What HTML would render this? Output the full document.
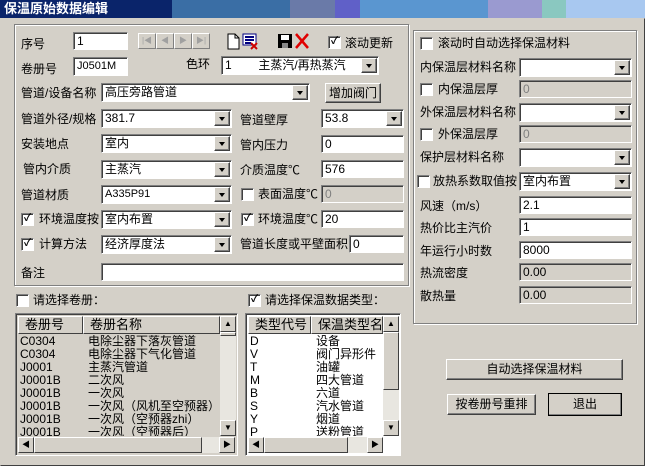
<!DOCTYPE html>
<html><head><meta charset="utf-8"><style>
*{box-sizing:border-box;margin:0;padding:0}
body{width:645px;height:466px;overflow:hidden;background:#d4d0c8;font-family:"Liberation Sans","Noto Sans CJK SC","WenQuanYi Zen Hei",sans-serif;font-size:12px;color:#000;position:relative}
div,span{position:absolute}
.t{white-space:nowrap;line-height:14px}
.f{background:#fff;border:1px solid;border-color:#808080 #fff #fff #808080;box-shadow:inset 1px 1px #404040;padding:2px 0 0 3px;line-height:13px;white-space:nowrap;overflow:hidden;font-size:12px}
.d{background:#d4d0c8;color:#808080}
.b{position:absolute;right:1px;top:1px;bottom:1px;width:16px;background:#d4d0c8;border:1px solid;border-color:#fff #404040 #404040 #fff;box-shadow:inset -1px -1px #808080}
.b:after{content:"";position:absolute;left:4px;top:5px;border:3px solid transparent;border-top:4px solid #000;border-bottom:0}
.g{border:1px solid #808080;box-shadow:1px 1px #fff,inset 1px 1px #fff}
.cb{width:13px;height:13px;background:#fff;border:1px solid;border-color:#808080 #fff #fff #808080;box-shadow:inset 1px 1px #404040;font-size:10px;line-height:10px;text-align:center;font-weight:bold}
.btn{background:#d4d0c8;border:1px solid;border-color:#fff #404040 #404040 #fff;box-shadow:inset -1px -1px #808080;text-align:center;line-height:19px}
.nb{width:18px;height:16px;top:33px;background:#d4d0c8;border:1px solid;border-color:#fff #808080 #808080 #fff;color:#a0a0a0;font-size:8px;line-height:14px;text-align:center}
.lst{background:#fff;border:1px solid;border-color:#808080 #fff #fff #808080;box-shadow:inset 1px 1px #404040;overflow:hidden}
.hd{background:#d4d0c8;border:1px solid;border-color:#fff #404040 #404040 #fff;height:18px;line-height:16px;padding-left:6px;font-size:13px;white-space:nowrap;overflow:hidden}
.sb{background:#e8e6e0}
.sa{width:16px;height:16px;background:#d4d0c8;border:1px solid;border-color:#fff #404040 #404040 #fff;font-size:8px;text-align:center;line-height:14px}
.row{height:13px;line-height:13px;font-size:12px;white-space:nowrap}
</style></head><body>
<div style="left:0;top:0;width:645px;height:18px;background:linear-gradient(90deg,#0a246a 0,#0a246a 172px,#3a6ea5 172px,#3a6ea5 290px,#6a7aa8 290px,#6a7aa8 335px,#6060c8 335px,#6060c8 360px,#5a96d0 360px,#5a96d0 488px,#9a9ad0 488px,#9a9ad0 542px,#8ac8c0 542px,#8ac8c0 566px,#a8c8f0 566px)"></div>
<div class="t" style="left:4px;top:2px;color:#fff;font-weight:bold;font-size:13px">保温原始数据编辑</div>
<div style="left:0;top:18px;width:645px;height:448px;border:1px solid;border-color:#d4d0c8 #404040 #404040 #d4d0c8"></div>

<div class="g" style="left:14px;top:24px;width:395px;height:262px"></div>
<div class="t" style="left:21px;top:37px">序号</div>
<div class="f" style="left:73px;top:32px;width:55px;height:18px">1</div>
<div class="nb" style="left:138px">|◀</div>
<div class="nb" style="left:156px">◀</div>
<div class="nb" style="left:174px">▶</div>
<div class="nb" style="left:192px">▶|</div>
<svg style="position:absolute;left:226px;top:32px" width="90" height="18"><path d="M2 2h7l4 4v11H2z" fill="#fff" stroke="#000"/><path d="M9 2v4h4" fill="none" stroke="#000"/><rect x="17" y="2" width="13" height="11" fill="#fff" stroke="#000080"/><path d="M19 5h9M19 8h9M19 11h6" stroke="#000080" stroke-width="2"/><path d="M25 11l6 6M31 11l-6 6" stroke="#c00" stroke-width="2"/><rect x="52" y="2" width="14" height="14" fill="#000"/><rect x="55" y="3" width="8" height="5" fill="#fff"/><rect x="56" y="11" width="6" height="5" fill="#888"/><path d="M70 2l12 14M82 2l-12 14" stroke="#e00000" stroke-width="2.5"/></svg>
<div class="cb" style="left:328px;top:36px">✓</div><div class="t" style="left:345px;top:36px">滚动更新</div>
<div class="t" style="left:21px;top:62px">卷册号</div>
<div class="f" style="left:73px;top:57px;width:55px;height:19px;font-size:11px">J0501M</div>
<div class="t" style="left:186px;top:57px">色环</div>
<div class="f" style="left:221px;top:56px;width:158px;height:19px">1&nbsp;&nbsp;&nbsp;&nbsp;&nbsp;&nbsp;&nbsp;&nbsp;主蒸汽/再热蒸汽<i class="b"></i></div>
<div class="t" style="left:21px;top:86px">管道/设备名称</div>
<div class="f" style="left:101px;top:83px;width:209px;height:19px">高压旁路管道<i class="b"></i></div>
<div class="btn" style="left:325px;top:83px;width:56px;height:20px">增加阀门</div>
<div class="t" style="left:21px;top:112px">管道外径/规格</div>
<div class="f" style="left:101px;top:109px;width:131px;height:19px">381.7<i class="b"></i></div>
<div class="t" style="left:240px;top:113px">管道壁厚</div>
<div class="f" style="left:321px;top:109px;width:83px;height:19px">53.8<i class="b"></i></div>
<div class="t" style="left:21px;top:137px">安装地点</div>
<div class="f" style="left:101px;top:134px;width:131px;height:19px">室内<i class="b"></i></div>
<div class="t" style="left:240px;top:138px">管内压力</div>
<div class="f" style="left:321px;top:135px;width:83px;height:18px">0</div>
<div class="t" style="left:23px;top:162px">管内介质</div>
<div class="f" style="left:101px;top:160px;width:131px;height:19px">主蒸汽<i class="b"></i></div>
<div class="t" style="left:240px;top:163px">介质温度℃</div>
<div class="f" style="left:321px;top:160px;width:83px;height:18px">576</div>
<div class="t" style="left:21px;top:188px">管道材质</div>
<div class="f" style="left:101px;top:185px;width:131px;height:19px;font-size:11px">A335P91<i class="b"></i></div>
<div class="cb" style="left:241px;top:188px"></div><div class="t" style="left:258px;top:187px">表面温度℃</div>
<div class="f d" style="left:321px;top:185px;width:83px;height:18px">0</div>
<div class="cb" style="left:21px;top:213px">✓</div><div class="t" style="left:39px;top:212px">环境温度按</div>
<div class="f" style="left:101px;top:210px;width:131px;height:19px">室内布置<i class="b"></i></div>
<div class="cb" style="left:241px;top:213px">✓</div><div class="t" style="left:258px;top:212px">环境温度℃</div>
<div class="f" style="left:321px;top:210px;width:83px;height:18px">20</div>
<div class="cb" style="left:21px;top:238px">✓</div><div class="t" style="left:39px;top:237px">计算方法</div>
<div class="f" style="left:101px;top:235px;width:131px;height:19px">经济厚度法<i class="b"></i></div>
<div class="t" style="left:240px;top:237px">管道长度或平壁面积</div>
<div class="f" style="left:349px;top:235px;width:55px;height:18px">0</div>
<div class="t" style="left:21px;top:266px">备注</div>
<div class="f" style="left:101px;top:263px;width:303px;height:18px"></div>

<div class="cb" style="left:16px;top:294px"></div><div class="t" style="left:33px;top:293px">请选择卷册：</div>
<div class="cb" style="left:248px;top:294px">✓</div><div class="t" style="left:265px;top:293px">请选择保温数据类型：</div>

<div class="lst" style="left:15px;top:313px;width:223px;height:143px;background:#d4d0c8">
<div class="hd" style="left:2px;top:2px;width:65px">卷册号</div>
<div class="hd" style="left:67px;top:2px;width:137px">卷册名称</div>
<div style="left:4px;top:21px;width:200px;height:101px;overflow:hidden">
<div class="row" style="left:0;top:0">C0304</div><div class="row" style="top:0;left:68px">电除尘器下落灰管道</div>
<div class="row" style="left:0;top:13px">C0304</div><div class="row" style="top:13px;left:68px">电除尘器下气化管道</div>
<div class="row" style="left:0;top:26px">J0001</div><div class="row" style="top:26px;left:68px">主蒸汽管道</div>
<div class="row" style="left:0;top:39px">J0001B</div><div class="row" style="top:39px;left:68px">二次风</div>
<div class="row" style="left:0;top:52px">J0001B</div><div class="row" style="top:52px;left:68px">一次风</div>
<div class="row" style="left:0;top:65px">J0001B</div><div class="row" style="top:65px;left:68px">一次风（风机至空预器）</div>
<div class="row" style="left:0;top:78px">J0001B</div><div class="row" style="top:78px;left:68px">一次风（空预器zhi）</div>
<div class="row" style="left:0;top:91px">J0001B</div><div class="row" style="top:91px;left:68px">一次风（空预器后）</div>
</div>
<div class="sb" style="left:204px;top:2px;width:16px;height:120px"></div>
<div class="sa" style="left:204px;top:2px">▲</div>
<div class="sa" style="left:204px;top:18px;height:4px"></div>
<div class="sa" style="left:204px;top:106px">▼</div>
<div class="sb" style="left:2px;top:123px;width:202px;height:16px"></div>
<div class="sa" style="left:2px;top:123px">◀</div>
<div class="sa" style="left:18px;top:123px;width:168px"></div>
<div class="sa" style="left:203px;top:123px">▶</div>
</div>

<div class="lst" style="left:245px;top:313px;width:156px;height:143px">
<div class="hd" style="left:2px;top:2px;width:63px">类型代号</div>
<div class="hd" style="left:65px;top:2px;width:72px">保温类型名称</div>
<div style="left:4px;top:21px;width:133px;height:101px;overflow:hidden">
<div class="row" style="left:0;top:0">D</div><div class="row" style="top:0;left:66px">设备</div>
<div class="row" style="left:0;top:13px">V</div><div class="row" style="top:13px;left:66px">阀门异形件</div>
<div class="row" style="left:0;top:26px">T</div><div class="row" style="top:26px;left:66px">油罐</div>
<div class="row" style="left:0;top:39px">M</div><div class="row" style="top:39px;left:66px">四大管道</div>
<div class="row" style="left:0;top:52px">B</div><div class="row" style="top:52px;left:66px">六道</div>
<div class="row" style="left:0;top:65px">S</div><div class="row" style="top:65px;left:66px">汽水管道</div>
<div class="row" style="left:0;top:78px">Y</div><div class="row" style="top:78px;left:66px">烟道</div>
<div class="row" style="left:0;top:91px">P</div><div class="row" style="top:91px;left:66px">送粉管道</div>
</div>
<div class="sb" style="left:137px;top:2px;width:16px;height:120px"></div>
<div class="sa" style="left:137px;top:2px">▲</div>
<div class="sa" style="left:137px;top:18px;height:58px"></div>
<div class="sa" style="left:137px;top:106px">▼</div>
<div class="sb" style="left:2px;top:123px;width:135px;height:16px"></div>
<div class="sa" style="left:2px;top:123px">◀</div>
<div class="sa" style="left:18px;top:123px;width:84px"></div>
<div class="sa" style="left:121px;top:123px">▶</div>
</div>

<div class="g" style="left:413px;top:30px;width:224px;height:294px"></div>
<div class="cb" style="left:420px;top:37px"></div><div class="t" style="left:438px;top:36px">滚动时自动选择保温材料</div>
<div class="t" style="left:420px;top:60px">内保温层材料名称</div>
<div class="f" style="left:519px;top:58px;width:113px;height:19px"><i class="b"></i></div>
<div class="cb" style="left:420px;top:83px"></div><div class="t" style="left:438px;top:82px">内保温层厚</div>
<div class="f d" style="left:519px;top:80px;width:113px;height:18px">0</div>
<div class="t" style="left:420px;top:105px">外保温层材料名称</div>
<div class="f" style="left:519px;top:103px;width:113px;height:19px"><i class="b"></i></div>
<div class="cb" style="left:420px;top:128px"></div><div class="t" style="left:438px;top:127px">外保温层厚</div>
<div class="f d" style="left:519px;top:125px;width:113px;height:18px">0</div>
<div class="t" style="left:420px;top:150px">保护层材料名称</div>
<div class="f" style="left:519px;top:148px;width:113px;height:19px"><i class="b"></i></div>
<div class="cb" style="left:417px;top:175px"></div><div class="t" style="left:433px;top:174px">放热系数取值按</div>
<div class="f" style="left:519px;top:172px;width:113px;height:19px">室内布置<i class="b"></i></div>
<div class="t" style="left:420px;top:199px">风速（m/s）</div>
<div class="f" style="left:519px;top:196px;width:113px;height:18px">2.1</div>
<div class="t" style="left:420px;top:221px">热价比主汽价</div>
<div class="f" style="left:519px;top:218px;width:113px;height:18px">1</div>
<div class="t" style="left:420px;top:244px">年运行小时数</div>
<div class="f" style="left:519px;top:241px;width:113px;height:18px">8000</div>
<div class="t" style="left:420px;top:266px">热流密度</div>
<div class="f" style="left:519px;top:263px;width:113px;height:18px;background:#d4d0c8">0.00</div>
<div class="t" style="left:420px;top:289px">散热量</div>
<div class="f" style="left:519px;top:286px;width:113px;height:18px;background:#d4d0c8">0.00</div>

<div class="btn" style="left:446px;top:359px;width:177px;height:21px">自动选择保温材料</div>
<div class="btn" style="left:447px;top:394px;width:89px;height:21px">按卷册号重排</div>
<div class="btn" style="left:548px;top:393px;width:74px;height:23px;outline:1px solid #000;outline-offset:-1px;line-height:21px">退出</div>
</body></html>
